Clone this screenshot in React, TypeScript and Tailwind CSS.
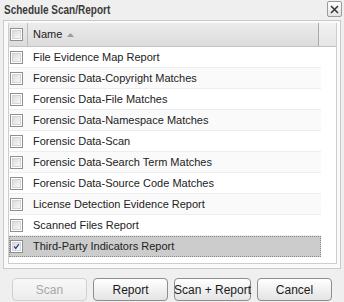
import React from "react";

const rows = [
  "File Evidence Map Report",
  "Forensic Data-Copyright Matches",
  "Forensic Data-File Matches",
  "Forensic Data-Namespace Matches",
  "Forensic Data-Scan",
  "Forensic Data-Search Term Matches",
  "Forensic Data-Source Code Matches",
  "License Detection Evidence Report",
  "Scanned Files Report",
  "Third-Party Indicators Report",
];

function Box({ checked }: { checked?: boolean }) {
  return (
    <div className="w-[13px] h-[13px] border border-[#8f8f8f] bg-white flex items-center justify-center">
      <div className="w-[9px] h-[9px] border border-[#d4d4d4] bg-gradient-to-br from-[#dcdcdc] to-[#f8f8f8] flex items-center justify-center">
        {checked && (
          <svg width="9" height="9" viewBox="0 0 9 9">
            <path d="M1.5 4.5 L3.5 7 L7.5 1.5" stroke="#21449c" strokeWidth="1.6" fill="none" />
          </svg>
        )}
      </div>
    </div>
  );
}

function Btn({ label, disabled, w }: { label: string; disabled?: boolean; w: string }) {
  return (
    <div
      className={`${w} h-[23px] rounded-[4px] border flex items-center justify-center text-[12px] whitespace-nowrap ${
        disabled
          ? "border-[#d0d0d0] text-[#a8a8a8] bg-gradient-to-b from-[#f8f8f8] to-[#ececec]"
          : "border-[#8e8e8e] text-[#1a1a1a] bg-gradient-to-b from-[#ffffff] to-[#e4e4e4]"
      }`}
    >
      {label}
    </div>
  );
}

export default function App() {
  return (
    <div
      className="w-[344px] h-[302px] bg-[#efefef] overflow-hidden"
      style={{ fontFamily: "Arial, 'Liberation Sans', sans-serif" }}
    >
      <div className="h-[20px] flex items-center justify-between pl-[4px] pr-[2px]">
        <div className="text-[13px] font-bold text-[#3a3a3a] whitespace-nowrap origin-left scale-x-[0.77]">
          Schedule Scan/Report
        </div>
        <div className="w-[15px] h-[16px] border border-[#9a9a9a] rounded-[2px] bg-gradient-to-b from-white to-[#e4e4e4] flex items-center justify-center -mt-[2px]">
          <svg width="9" height="9" viewBox="0 0 9 9">
            <path d="M1 1 L8 8 M8 1 L1 8" stroke="#333" strokeWidth="1.5" />
          </svg>
        </div>
      </div>
      <div className="mx-[3px] h-[249px] border border-[#c9c9c9] bg-[#fafafa] pl-[4px] pr-[3px] pt-[2px] pb-[4px]">
        <div className="h-full border border-[#cdcdcd] border-t-0 bg-white flex flex-col">
          <div className="h-[24px] flex bg-gradient-to-b from-[#ececec] to-[#dcdcdc] border-b border-[#c4c4c4]">
            <div className="w-[19px] flex items-center pl-[1px] border-r border-[#bdbdbd]">
              <Box />
            </div>
            <div className="flex-1 flex items-center pl-[5px] text-[11px] text-[#222] border-r border-[#a9a9a9]">
              Name
              <svg width="9" height="6" viewBox="0 0 9 6" className="ml-[4px]">
                <path d="M1 5 L4.5 1 L8 5 Z" fill="#9a9a9a" />
              </svg>
            </div>
            <div className="w-[17px] bg-gradient-to-b from-[#f2f2f2] to-[#e6e6e6]"></div>
          </div>
          <div className="flex-1 flex">
            <div className="w-[312px] flex flex-col">
              {rows.map((r, i) => {
                const sel = i === rows.length - 1;
                return (
                  <div
                    key={r}
                    className={`h-[21px] flex items-center border-b ${
                      sel
                        ? "bg-[#cccccc] border border-dotted border-[#8a8a8a]"
                        : i % 2 === 1
                        ? "bg-[#fafafa] border-[#ededed]"
                        : "bg-white border-[#ededed]"
                    }`}
                  >
                    <div className={`${sel ? "w-[18px] pl-0" : "w-[19px] pl-[1px]"} flex items-center`}>
                      <Box checked={sel} />
                    </div>
                    <div className="pl-[5px] text-[11px] text-[#222] whitespace-nowrap">{r}</div>
                  </div>
                );
              })}
            </div>
          </div>
        </div>
      </div>
      <div className="flex gap-[6px] pl-[12px] mt-[9px]">
        <Btn label="Scan" disabled w="w-[75px]" />
        <Btn label="Report" w="w-[75px]" />
        <Btn label="Scan + Report" w="w-[77px]" />
        <Btn label="Cancel" w="w-[75px]" />
      </div>
    </div>
  );
}
